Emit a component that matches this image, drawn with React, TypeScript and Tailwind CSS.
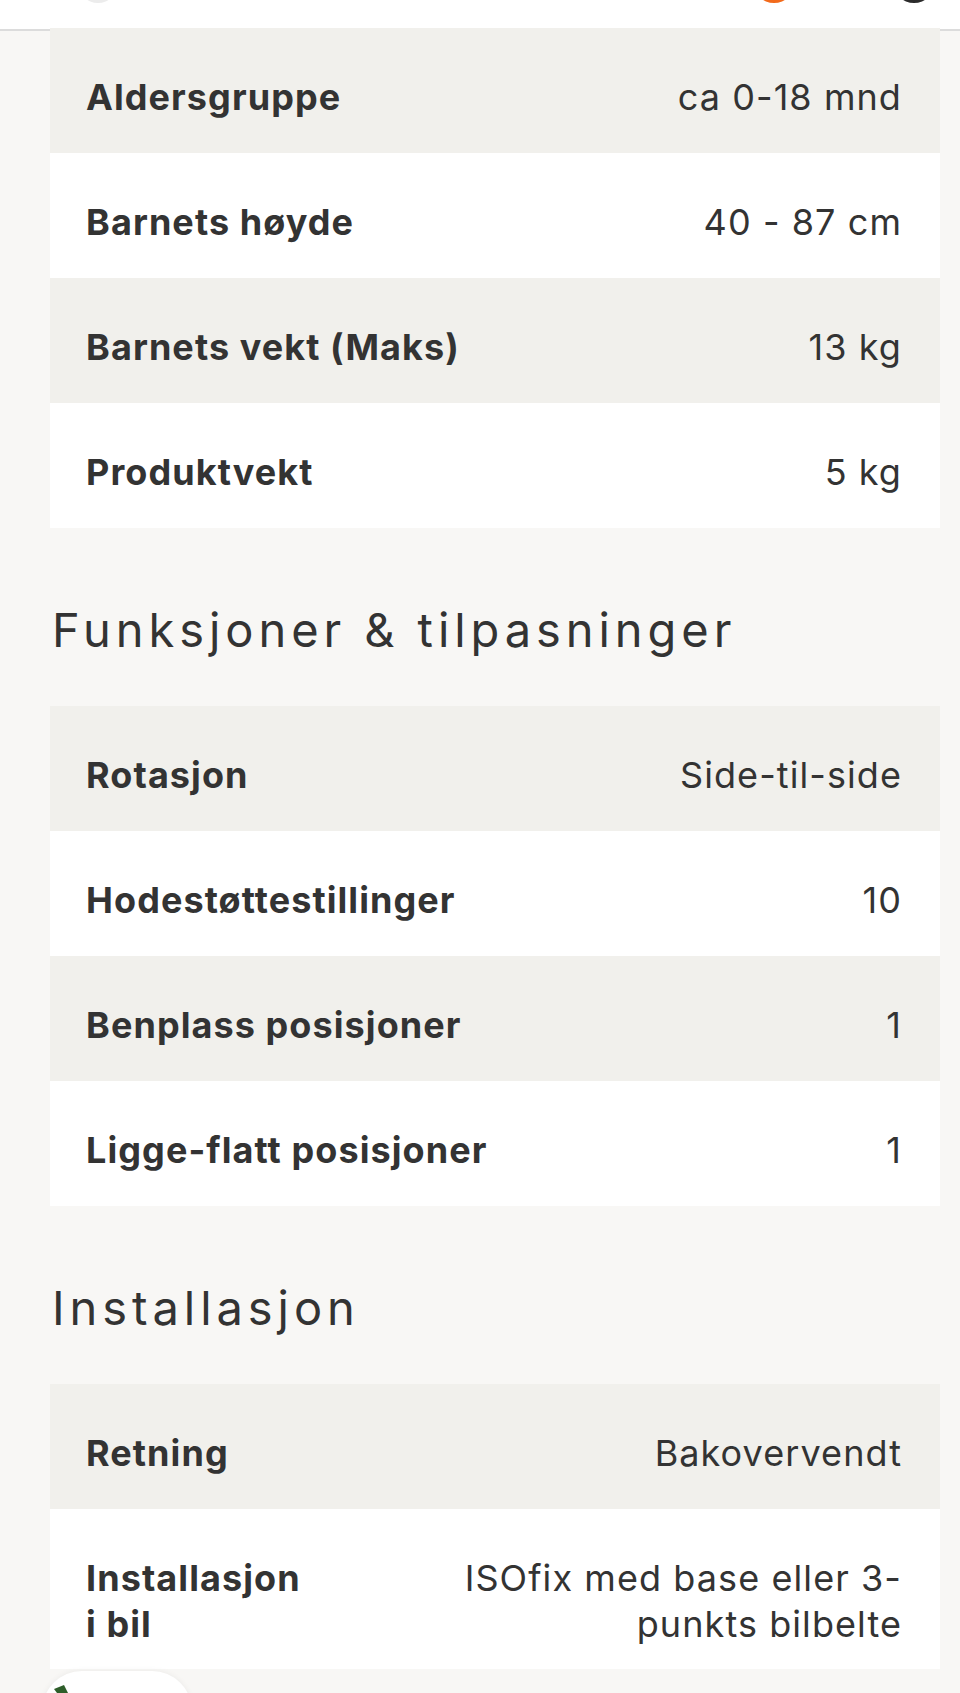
import React from 'react';

type Row = { label: string; value: string; narrow?: boolean };

const groups: { title?: string; rows: Row[] }[] = [
  {
    rows: [
      { label: 'Aldersgruppe', value: 'ca 0-18 mnd' },
      { label: 'Barnets høyde', value: '40 - 87 cm' },
      { label: 'Barnets vekt (Maks)', value: '13 kg' },
      { label: 'Produktvekt', value: '5 kg' },
    ],
  },
  {
    title: 'Funksjoner & tilpasninger',
    rows: [
      { label: 'Rotasjon', value: 'Side-til-side' },
      { label: 'Hodestøttestillinger', value: '10' },
      { label: 'Benplass posisjoner', value: '1' },
      { label: 'Ligge-flatt posisjoner', value: '1' },
    ],
  },
  {
    title: 'Installasjon',
    rows: [
      { label: 'Retning', value: 'Bakovervendt' },
      { label: 'Installasjon i bil', value: 'ISOfix med base eller 3-punkts bilbelte', narrow: true },
    ],
  },
];

const SpecTable = ({ rows, first }: { rows: Row[]; first?: boolean }) => (
  <div className={first ? '-mt-[3px]' : ''}>
    {rows.map((r, i) => (
      <div
        key={r.label}
        className={`flex items-start justify-between gap-10 min-h-[125px] pt-[46px] pb-[22px] pl-[36px] pr-[38px] text-[36px] leading-[46px] tracking-[0.03em] text-[#333333] ${
          i % 2 === 0 ? 'bg-[#f1f0ec]' : 'bg-white'
        }`}
      >
        <span className={`font-bold ${r.narrow ? 'w-[222px]' : 'shrink-0'}`}>{r.label}</span>
        <span className="text-right max-w-[480px]">{r.value}</span>
      </div>
    ))}
  </div>
);

export default function App() {
  return (
    <div
      className="relative w-[960px] h-[1693px] overflow-hidden bg-[#f8f7f5]"
      style={{ fontFamily: 'Inter, "Noto Sans", sans-serif' }}
    >
      {/* Header (scrolled, mostly out of view) */}
      <div className="h-[31px] bg-white border-b-2 border-[#dcdcdc] overflow-hidden flex items-start px-[78px]">
        <div className="w-[40px] h-[40px] -mt-[37px] rounded-full bg-[#ececec]" />
        <div className="ml-auto w-[42px] h-[42px] -mt-[39px] rounded-full bg-[#f26a1b]" />
        <div className="ml-[98px] -mr-[53px] w-[42px] h-[42px] -mt-[39px] rounded-full bg-[#2b2b2b]" />
      </div>

      <div className="pl-[50px] pr-[20px]">
        {groups.map((g, gi) => (
          <div key={gi}>
            {g.title && (
              <h2 className="mt-[72px] mb-[47px] pl-[2px] text-[47px] leading-[59px] font-normal tracking-[0.105em] text-[#333333]">
                {g.title}
              </h2>
            )}
            <SpecTable rows={g.rows} first={gi === 0} />
          </div>
        ))}
      </div>

      {/* Floating button, cut off at the bottom */}
      <div className="absolute left-[42px] top-[1671px] w-[150px] h-[80px] rounded-full bg-white shadow-[0_0_6px_rgba(0,0,0,0.06)]">
        <svg className="absolute left-[8px] top-[12px]" width="26" height="20" viewBox="0 0 26 20">
          <path d="M4 6 L14 2 L18 10 L10 14 Z" fill="#2e5e2a" />
        </svg>
      </div>
    </div>
  );
}
